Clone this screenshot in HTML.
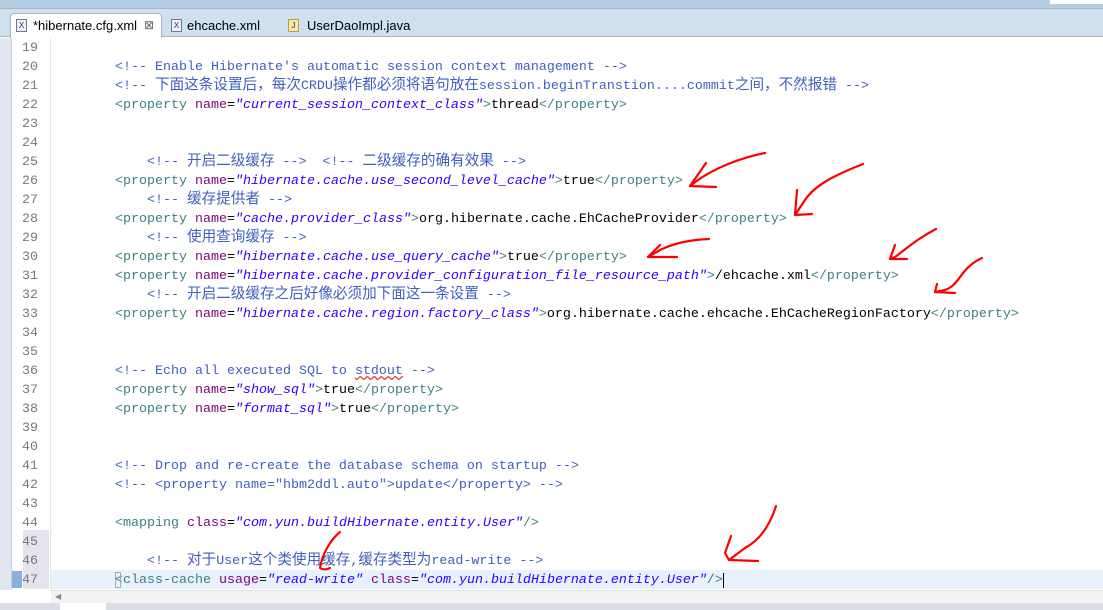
<!DOCTYPE html>
<html><head><meta charset="utf-8"><style>
body{margin:0;width:1103px;height:610px;overflow:hidden;background:#fff;position:relative;font-family:"Liberation Sans",sans-serif}
.top{position:absolute;left:0;top:0;width:1103px;height:8px;background:#b3cde3}
.bar{position:absolute;left:0;top:8px;width:1103px;height:29px;background:#cfe0ee;border-top:1px solid #a8b4c4;border-bottom:1px solid #a8b4c4;box-sizing:border-box}
.tab{position:absolute;top:13px;left:10px;width:152px;height:25px;background:#fff;border:1px solid #a8b4c4;border-bottom:none;border-radius:4px 4px 0 0;box-sizing:border-box}
.tt{position:absolute;top:18px;font-size:13px;color:#000}
.ic{position:absolute;top:19px;width:9px;height:11px;border:1px solid #6a7a90;background:#eef;font-size:8px;line-height:11px;text-align:center;color:#334}
.lp{position:absolute;left:0;top:38px;width:11px;height:552px;background:#e3e8f0;border-right:1px solid #c6ccd6}
.code{position:absolute;left:0;top:39px;font-family:"Liberation Mono","Noto Sans CJK SC",monospace;font-size:13.33px;line-height:19px;white-space:pre}
.ln{position:absolute;left:22px;width:20px;color:#787878;text-align:left}
.tx{position:absolute;left:51px;height:19px}
.cm{color:#3f5fbf}.tg{color:#3f7f7f}.an{color:#7f007f}.av{color:#2a00ff;font-style:italic}
.c{font-family:"Noto Sans CJK SC",sans-serif;font-size:14.6px;line-height:0}
.hl{position:absolute;left:51px;top:570px;width:1052px;height:19px;background:#e8f2fe}
.sb{position:absolute;left:51px;top:590px;width:1052px;height:13px;background:#f3f3f3;border-top:1px solid #e0e0e0}
.bot{position:absolute;left:0;top:603px;width:1103px;height:7px;background:#d8dde6}
</style></head><body>
<div class="top"></div><div class="bar"></div>
<div style="position:absolute;left:1050px;top:0;width:53px;height:4px;background:#fff"></div>
<div class="tab"></div>
<div class="ic" style="left:16px">X</div><div class="tt" style="left:33px">*hibernate.cfg.xml</div><div class="tt" style="left:144px;color:#666;font-size:12px">⊠</div>
<div class="ic" style="left:171px">X</div><div class="tt" style="left:187px">ehcache.xml</div>
<div class="ic" style="left:288px;background:#f7e7a8;border-color:#b9a040">J</div><div class="tt" style="left:307px">UserDaoImpl.java</div>
<div class="lp"></div>
<div style="position:absolute;left:23px;top:530px;width:26px;height:59px;background:#e4e4ee"></div>
<div style="position:absolute;left:12px;top:571px;width:10px;height:17px;background:#8ab0de"></div>
<div class="hl"></div>
<div style="position:absolute;left:50px;top:38px;width:1px;height:552px;background:#e8e8e8"></div>
<div class="code">
<div class="ln" style="top:0">19</div>
<div class="ln" style="top:19px">20</div><div class="tx" style="top:19px">        <span class="cm">&lt;!-- Enable Hibernate's automatic session context management --&gt;</span></div>
<div class="ln" style="top:38px">21</div><div class="tx cm" style="top:38px">        &lt;!-- <span class="c">下面这条设置后，每次</span>CRDU<span class="c">操作都必须将语句放在</span>session.beginTranstion....commit<span class="c">之间，不然报错</span> --&gt;</div>
<div class="ln" style="top:57px">22</div><div class="tx" style="top:57px">        <span class="tg">&lt;property</span> <span class="an">name</span>=<span class="av">"current_session_context_class"</span><span class="tg">&gt;</span>thread<span class="tg">&lt;/property&gt;</span></div>
<div class="ln" style="top:76px">23</div>
<div class="ln" style="top:95px">24</div>
<div class="ln" style="top:114px">25</div><div class="tx cm" style="top:114px">            &lt;!-- <span class="c">开启二级缓存</span> --&gt;  &lt;!-- <span class="c">二级缓存的确有效果</span> --&gt;</div>
<div class="ln" style="top:133px">26</div><div class="tx" style="top:133px">        <span class="tg">&lt;property</span> <span class="an">name</span>=<span class="av">"hibernate.cache.use_second_level_cache"</span><span class="tg">&gt;</span>true<span class="tg">&lt;/property&gt;</span></div>
<div class="ln" style="top:152px">27</div><div class="tx cm" style="top:152px">            &lt;!-- <span class="c">缓存提供者</span> --&gt;</div>
<div class="ln" style="top:171px">28</div><div class="tx" style="top:171px">        <span class="tg">&lt;property</span> <span class="an">name</span>=<span class="av">"cache.provider_class"</span><span class="tg">&gt;</span>org.hibernate.cache.EhCacheProvider<span class="tg">&lt;/property&gt;</span></div>
<div class="ln" style="top:190px">29</div><div class="tx cm" style="top:190px">            &lt;!-- <span class="c">使用查询缓存</span> --&gt;</div>
<div class="ln" style="top:209px">30</div><div class="tx" style="top:209px">        <span class="tg">&lt;property</span> <span class="an">name</span>=<span class="av">"hibernate.cache.use_query_cache"</span><span class="tg">&gt;</span>true<span class="tg">&lt;/property&gt;</span></div>
<div class="ln" style="top:228px">31</div><div class="tx" style="top:228px">        <span class="tg">&lt;property</span> <span class="an">name</span>=<span class="av">"hibernate.cache.provider_configuration_file_resource_path"</span><span class="tg">&gt;</span>/ehcache.xml<span class="tg">&lt;/property&gt;</span></div>
<div class="ln" style="top:247px">32</div><div class="tx cm" style="top:247px">            &lt;!-- <span class="c">开启二级缓存之后好像必须加下面这一条设置</span> --&gt;</div>
<div class="ln" style="top:266px">33</div><div class="tx" style="top:266px">        <span class="tg">&lt;property</span> <span class="an">name</span>=<span class="av">"hibernate.cache.region.factory_class"</span><span class="tg">&gt;</span>org.hibernate.cache.ehcache.EhCacheRegionFactory<span class="tg">&lt;/property&gt;</span></div>
<div class="ln" style="top:285px">34</div>
<div class="ln" style="top:304px">35</div>
<div class="ln" style="top:323px">36</div><div class="tx cm" style="top:323px">        &lt;!-- Echo all executed SQL to <span style="text-decoration:underline wavy #e04040">stdout</span> --&gt;</div>
<div class="ln" style="top:342px">37</div><div class="tx" style="top:342px">        <span class="tg">&lt;property</span> <span class="an">name</span>=<span class="av">"show_sql"</span><span class="tg">&gt;</span>true<span class="tg">&lt;/property&gt;</span></div>
<div class="ln" style="top:361px">38</div><div class="tx" style="top:361px">        <span class="tg">&lt;property</span> <span class="an">name</span>=<span class="av">"format_sql"</span><span class="tg">&gt;</span>true<span class="tg">&lt;/property&gt;</span></div>
<div class="ln" style="top:380px">39</div>
<div class="ln" style="top:399px">40</div>
<div class="ln" style="top:418px">41</div><div class="tx cm" style="top:418px">        &lt;!-- Drop and re-create the database schema on startup --&gt;</div>
<div class="ln" style="top:437px">42</div><div class="tx cm" style="top:437px">        &lt;!-- &lt;property name="hbm2ddl.auto"&gt;update&lt;/property&gt; --&gt;</div>
<div class="ln" style="top:456px">43</div>
<div class="ln" style="top:475px">44</div><div class="tx" style="top:475px">        <span class="tg">&lt;mapping</span> <span class="an">class</span>=<span class="av">"com.yun.buildHibernate.entity.User"</span><span class="tg">/&gt;</span></div>
<div class="ln" style="top:494px">45</div>
<div class="ln" style="top:513px">46</div><div class="tx cm" style="top:513px">            &lt;!-- <span class="c">对于</span>User<span class="c">这个类使用缓存</span>,<span class="c">缓存类型为</span>read-write --&gt;</div>
<div class="ln" style="top:532px">47</div><div class="tx" style="top:532px">        <span class="tg">&lt;class-cache</span> <span class="an">usage</span>=<span class="av">"read-write"</span> <span class="an">class</span>=<span class="av">"com.yun.buildHibernate.entity.User"</span><span class="tg">/&gt;</span><span style="border-left:1px solid #000"></span></div>
</div>
<div style="position:absolute;left:115px;top:572px;width:6px;height:16px;border:1px solid #aaa;box-sizing:border-box"></div>
<div class="sb"></div>
<div style="position:absolute;left:55px;top:592px;font-size:8px;color:#888">◀</div>
<div class="bot"></div>
<div style="position:absolute;left:60px;top:603px;width:46px;height:7px;background:#fff"></div>
<svg style="position:absolute;left:0;top:0" width="1103" height="610" fill="none" stroke="#f00" stroke-width="2.2" stroke-linecap="round" stroke-linejoin="round">
<path d="M765 153 C740 158 715 168 698 180 L690 186 L716 187"/><path d="M706 163 L690 186"/>
<path d="M863 164 C835 175 815 185 805 200 L795 215 L812 214"/><path d="M797 190 L795 215"/>
<path d="M709 239 C685 240 670 245 660 250 L648 257 L677 257"/><path d="M660 245 L648 257"/>
<path d="M936 229 C915 240 905 250 895 257 L890 259 L907 259"/><path d="M895 245 L890 259"/>
<path d="M982 258 C960 268 960 285 945 290 L935 292 L955 293"/><path d="M937 284 L935 292"/>
<path d="M776 506 C770 525 760 540 745 548 L729 560 L758 561"/><path d="M731 536 L725 553 L729 560"/>
<path d="M340 532 C330 540 322 555 320 568 C323 570 326 570 330 568"/>
</svg>
</body></html>
